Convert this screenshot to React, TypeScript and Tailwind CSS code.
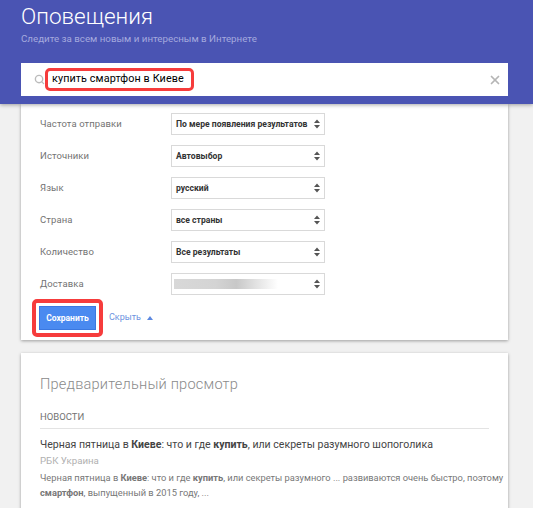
import React from 'react';
import { Search, X } from 'lucide-react';

const rows = [
  { label: 'Частота отправки', value: 'По мере появления результатов' },
  { label: 'Источники', value: 'Автовыбор' },
  { label: 'Язык', value: 'русский' },
  { label: 'Страна', value: 'все страны' },
  { label: 'Количество', value: 'Все результаты' },
  { label: 'Доставка', value: '' },
];

const Stepper = () => (
  <svg width="6" height="10" viewBox="0 0 6 10" className="shrink-0">
    <path d="M3 0.5 L6 4 H0 Z M3 9.5 L6 6 H0 Z" fill="#555" />
  </svg>
);

export default function App() {
  return (
    <div className="h-[508px] w-[533px] overflow-hidden bg-[#f1f1f1] font-['Roboto',sans-serif]">
      {/* Header */}
      <div className="relative z-10 h-[104px] bg-[#4a54b3] px-[21px] shadow-[0_1px_4px_rgba(0,0,0,0.35)]">
        <div className="pt-[1px] text-[22.5px] font-light leading-[30px] text-white">Оповещения</div>
        <div className="mt-[1px] text-[9.75px] leading-[14px] text-[#a5aade]">
          Следите за всем новым и интересным в Интернете
        </div>
        <div className="mt-[17px] flex h-[33px] w-[487px] items-center bg-white pl-[13px] pr-[6px]">
          <Search size={11} strokeWidth={3} className="shrink-0 text-[#bbb]" />
          <span className="flex h-[23px] w-[149px] items-center rounded-[5px] border-[3px] border-[#f63c3c] pl-[4px] text-[10.8px] tracking-[0.1px] whitespace-nowrap text-black">
            купить смартфон в Киеве
          </span>
          <X size={14} strokeWidth={3} className="ml-auto text-[#b5b5b5]" />
        </div>
      </div>

      {/* Settings card */}
      <div className="ml-[21px] h-[236px] w-[487px] bg-white px-[19px] pt-[9px] shadow-[0_1px_3px_rgba(0,0,0,0.35)]">
        <div className="flex flex-col gap-[10px]">
          {rows.map((row) => (
            <div key={row.label} className="flex h-[22px] items-center">
              <div className="w-[131px] text-[9.5px] tracking-[0.1px] text-[#737373]">{row.label}</div>
              <div className="flex h-[22px] w-[154px] items-center justify-between border border-[#d9d9d9] pl-[4px] pr-[4px] text-[8.6px] font-bold whitespace-nowrap text-[#333]">
                {row.value ? (
                  <span>{row.value}</span>
                ) : (
                  <div className="-ml-[2px] h-[10px] w-[104px] bg-[linear-gradient(90deg,#d8d8d8_0%,#d4d4d4_40%,#c8c8c8_60%,#ffffff_100%)]" />
                )}
                <Stepper />
              </div>
            </div>
          ))}
        </div>
        <div className="mt-[4px] flex items-center">
          <div className="-ml-[8px] rounded-[5px] border-[4px] border-[#f63c3c] p-[3px]">
            <button className="flex h-[24px] w-[57px] items-center justify-center border border-[#3b78e0] bg-[#4a8af0] text-[8.5px] font-bold text-white">
              Сохранить
            </button>
          </div>
          <span className="ml-[6px] text-[9px] text-[#6d93e0]">Скрыть</span>
          <svg width="6" height="4" viewBox="0 0 6 4" className="ml-[6px]">
            <path d="M3 0 L6 4 H0 Z" fill="#5c88e0" />
          </svg>
        </div>
      </div>

      {/* Preview card */}
      <div className="ml-[21px] mt-[13px] h-[200px] w-[487px] bg-white px-[19px] shadow-[0_1px_3px_rgba(0,0,0,0.35)]">
        <div className="pt-[21px] text-[14.6px] font-light leading-[20px] tracking-[0.2px] text-[#8a8a8a]">
          Предварительный просмотр
        </div>
        <div className="mt-[16px] border-b border-[#e3e3e3] pb-[4px] text-[9.5px] uppercase leading-[14px] text-[#737373]">
          Новости
        </div>
        <div className="mt-[8px] text-[10.55px] leading-[16px] text-[#444]">
          Черная пятница в <b>Киеве</b>: что и где <b>купить</b>, или секреты разумного шопоголика
        </div>
        <div className="text-[9.7px] leading-[15px] text-[#b0b0b0]">РБК Украина</div>
        <div className="mt-[2px] text-[9.3px] leading-[15px] whitespace-nowrap text-[#777]">
          Черная пятница в <b>Киеве</b>: что и где <b>купить</b>, или секреты разумного ... развиваются очень быстро, поэтому
          <br />
          <b>смартфон</b>, выпущенный в 2015 году, ...
        </div>
      </div>
    </div>
  );
}
